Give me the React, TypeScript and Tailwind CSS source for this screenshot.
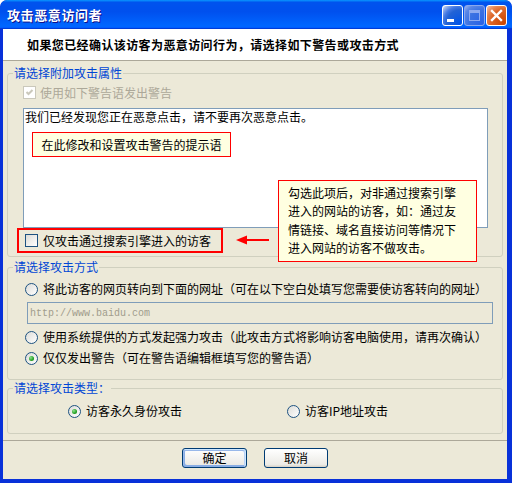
import type { ReactNode } from 'react'

function TitleBar() {
  return (
    <div className="h-[29px] shrink-0 flex items-center justify-between rounded-t-[7px] bg-[linear-gradient(180deg,#0997ff,#0053ee_8%,#0050ee_40%,#0066ff_88%,#0066ff_93%,#005bff_95%,#003dd7_96%,#003dd7)]">
      <span className="pl-[7px] text-white font-bold text-[13px] tracking-[0.6px] [text-shadow:1px_1px_#0f1089]">
        攻击恶意访问者
      </span>
      <div className="flex gap-[1px] mr-[5px] mt-[2px]">
        <div className="relative w-[21px] h-[21px] rounded-[3px] border border-white bg-[radial-gradient(circle_at_90%_90%,#0054e9_0%,#2263d5_55%,#4479e4_70%,#a3bbec_90%,#fff_100%)]">
          <div className="absolute left-[4px] top-[13px] w-[7px] h-[3px] bg-white" />
        </div>
        <div className="relative w-[21px] h-[21px] rounded-[3px] border border-[#8aa8ee] bg-[radial-gradient(circle_at_90%_90%,#2a63e6_0%,#3c72e2_55%,#5b87e6_80%,#9db5ee_100%)]">
          <div className="absolute left-[4px] top-[4px] w-[11px] h-[11px] border border-[#8eaaf0] border-t-[3px]" />
        </div>
        <div className="relative w-[21px] h-[21px] rounded-[3px] border border-white bg-[radial-gradient(circle_at_90%_90%,#cc4600_0%,#dc6527_55%,#e6854f_75%,#f0b899_95%,#fff_100%)]">
          <svg width="19" height="19" viewBox="0 0 19 19" className="absolute left-0 top-0">
            <path d="M5 5 L14 14 M14 5 L5 14" stroke="#fff" strokeWidth="2.4" strokeLinecap="square" />
          </svg>
        </div>
      </div>
    </div>
  )
}

function XpCheck({ checked = false, disabled = false }: { checked?: boolean; disabled?: boolean }) {
  return (
    <div
      className={
        disabled
          ? 'relative w-[13px] h-[13px] shrink-0 border border-[#cac8bb] bg-white'
          : 'relative w-[13px] h-[13px] shrink-0 border border-[#1d5281] bg-[linear-gradient(135deg,#dcdcd7,#fff)]'
      }
    >
      {checked && (
        <svg width="11" height="11" viewBox="0 0 11 11" className="absolute left-0 top-0">
          <path d="M2.5 5 L4.5 7 L8.5 3" fill="none" stroke={disabled ? '#cac8bb' : '#21a121'} strokeWidth="2" />
        </svg>
      )}
    </div>
  )
}

function XpRadio({ checked = false }: { checked?: boolean }) {
  return (
    <div className="relative w-[13px] h-[13px] shrink-0 rounded-full border border-[#1d5281] bg-[linear-gradient(135deg,#dcdcd7,#fff)]">
      {checked && (
        <div className="absolute left-[3px] top-[3px] w-[5px] h-[5px] rounded-full bg-[radial-gradient(circle_at_35%_35%,#8fe08f,#21a121_60%,#1a7a1a)]" />
      )}
    </div>
  )
}

function Group({ title, className, children }: { title: string; className?: string; children: ReactNode }) {
  return (
    <fieldset className={'relative mx-[4px] border border-[#d0d0bf] rounded-[3px] ' + (className ?? '')}>
      <legend className="ml-[5px] px-[1px] leading-[14px] text-[#0046d5]">{title}</legend>
      {children}
    </fieldset>
  )
}

function RadioRow({ checked, label, className }: { checked?: boolean; label: string; className?: string }) {
  return (
    <div className={'flex items-center h-[14px] ml-[17px] ' + (className ?? '')}>
      <XpRadio checked={checked} />
      <span className="ml-[5px] leading-[14px]">{label}</span>
    </div>
  )
}

export default function App() {
  return (
    <div className="w-[512px] h-[483px] flex flex-col overflow-hidden rounded-t-[7px] bg-[#0831d9] text-[12px] text-black font-['Noto_Sans_CJK_SC',sans-serif]">
      <TitleBar />
      <div className="flex-1 ml-[3px] mr-[5px] mb-[4px] flex flex-col bg-[#ece9d8]">
        <div className="h-[32px] shrink-0 bg-white border-b border-[#aca899] flex items-center pl-[24px] font-bold tracking-[0.4px]">
          如果您已经确认该访客为恶意访问行为，请选择如下警告或攻击方式
        </div>

        <Group title="请选择附加攻击属性" className="mt-[5px] pb-[3px]">
          <div className="flex items-center h-[13px] mt-[6px] ml-[15px]">
            <XpCheck checked disabled />
            <span className="ml-[4px] leading-[14px] text-[#aca899]">使用如下警告语发出警告</span>
          </div>
          <div className="relative mt-[9px] ml-[15px] w-[465px] h-[120px] border border-[#7f9db9] bg-white px-[1px] pt-[1px] leading-[14px]">
            我们已经发现您正在恶意点击，请不要再次恶意点击。
            <div className="absolute left-[8px] top-[23px] w-[199px] h-[25px] border border-[#ff0000] bg-[#ffffe1] flex items-center justify-center">
              在此修改和设置攻击警告的提示语
            </div>
          </div>
          <div className="flex items-center ml-[9px] w-[206px] h-[25px] border-2 border-[#ff0000] pl-[6px]">
            <XpCheck />
            <span className="ml-[5px] leading-[14px]">仅攻击通过搜索引擎进入的访客</span>
          </div>

          <svg width="34" height="12" viewBox="0 0 34 12" className="absolute left-[228px] top-[154px]">
            <path d="M9 6 L33 6" stroke="#ff0000" strokeWidth="2" />
            <path d="M0 6 L11 1.5 L11 10.5 Z" fill="#ff0000" />
          </svg>
          <div className="absolute z-10 left-[270px] top-[100px] w-[199px] h-[82px] border border-[#ff0000] bg-[#ffffe1] pl-[9px] pt-[3px] leading-[18.3px]">
            <div>勾选此项后，对非通过搜索引擎</div>
            <div>进入的网站的访客，如：通过友</div>
            <div>情链接、域名直接访问等情况下</div>
            <div>进入网站的访客不做攻击。</div>
          </div>
        </Group>

        <Group title="请选择攻击方式" className="mt-[3px] pb-[14px]">
          <RadioRow className="mt-[8px]" label="将此访客的网页转向到下面的网址（可在以下空白处填写您需要使访客转向的网址）" />
          <div className="mt-[6px] ml-[19px] w-[466px] h-[22px] border border-[#7f9db9] bg-[#ece9d8] flex items-center pl-[2px] font-['Liberation_Mono',monospace] text-[10px] text-[#a09c8c]">
            http://www.baidu.com
          </div>
          <RadioRow className="mt-[6px]" label="使用系统提供的方式发起强力攻击（此攻击方式将影响访客电脑使用，请再次确认）" />
          <RadioRow className="mt-[7px]" checked label="仅仅发出警告（可在警告语编辑框填写您的警告语）" />
        </Group>

        <Group title="请选择攻击类型：" className="mt-[1px] pb-[15px]">
          <div className="flex items-center h-[14px] mt-[9px] ml-[60px]">
            <XpRadio checked />
            <span className="ml-[5px] leading-[14px] w-[201px]">访客永久身份攻击</span>
            <XpRadio />
            <span className="ml-[5px] leading-[14px]">访客IP地址攻击</span>
          </div>
        </Group>

        <div className="mt-[6px] border-t border-[#aca899] h-[1px] bg-white" />

        <div className="flex justify-center gap-[17px] mt-[7px]">
          <button className="w-[65px] h-[20px] rounded-[3px] border border-[#003c74] bg-[linear-gradient(180deg,#fff,#ecebe6_86%,#d6d0c5)] shadow-[inset_-1px_1px_#cee7ff,inset_1px_2px_#98b8ea,inset_-2px_2px_#bcd4f6,inset_1px_-1px_#89ade4,inset_2px_-2px_#89ade4] leading-[18px]">
            确定
          </button>
          <button className="w-[64px] h-[20px] rounded-[3px] border border-[#003c74] bg-[linear-gradient(180deg,#fff,#ecebe6_86%,#d6d0c5)] leading-[18px]">
            取消
          </button>
        </div>
      </div>
    </div>
  )
}
